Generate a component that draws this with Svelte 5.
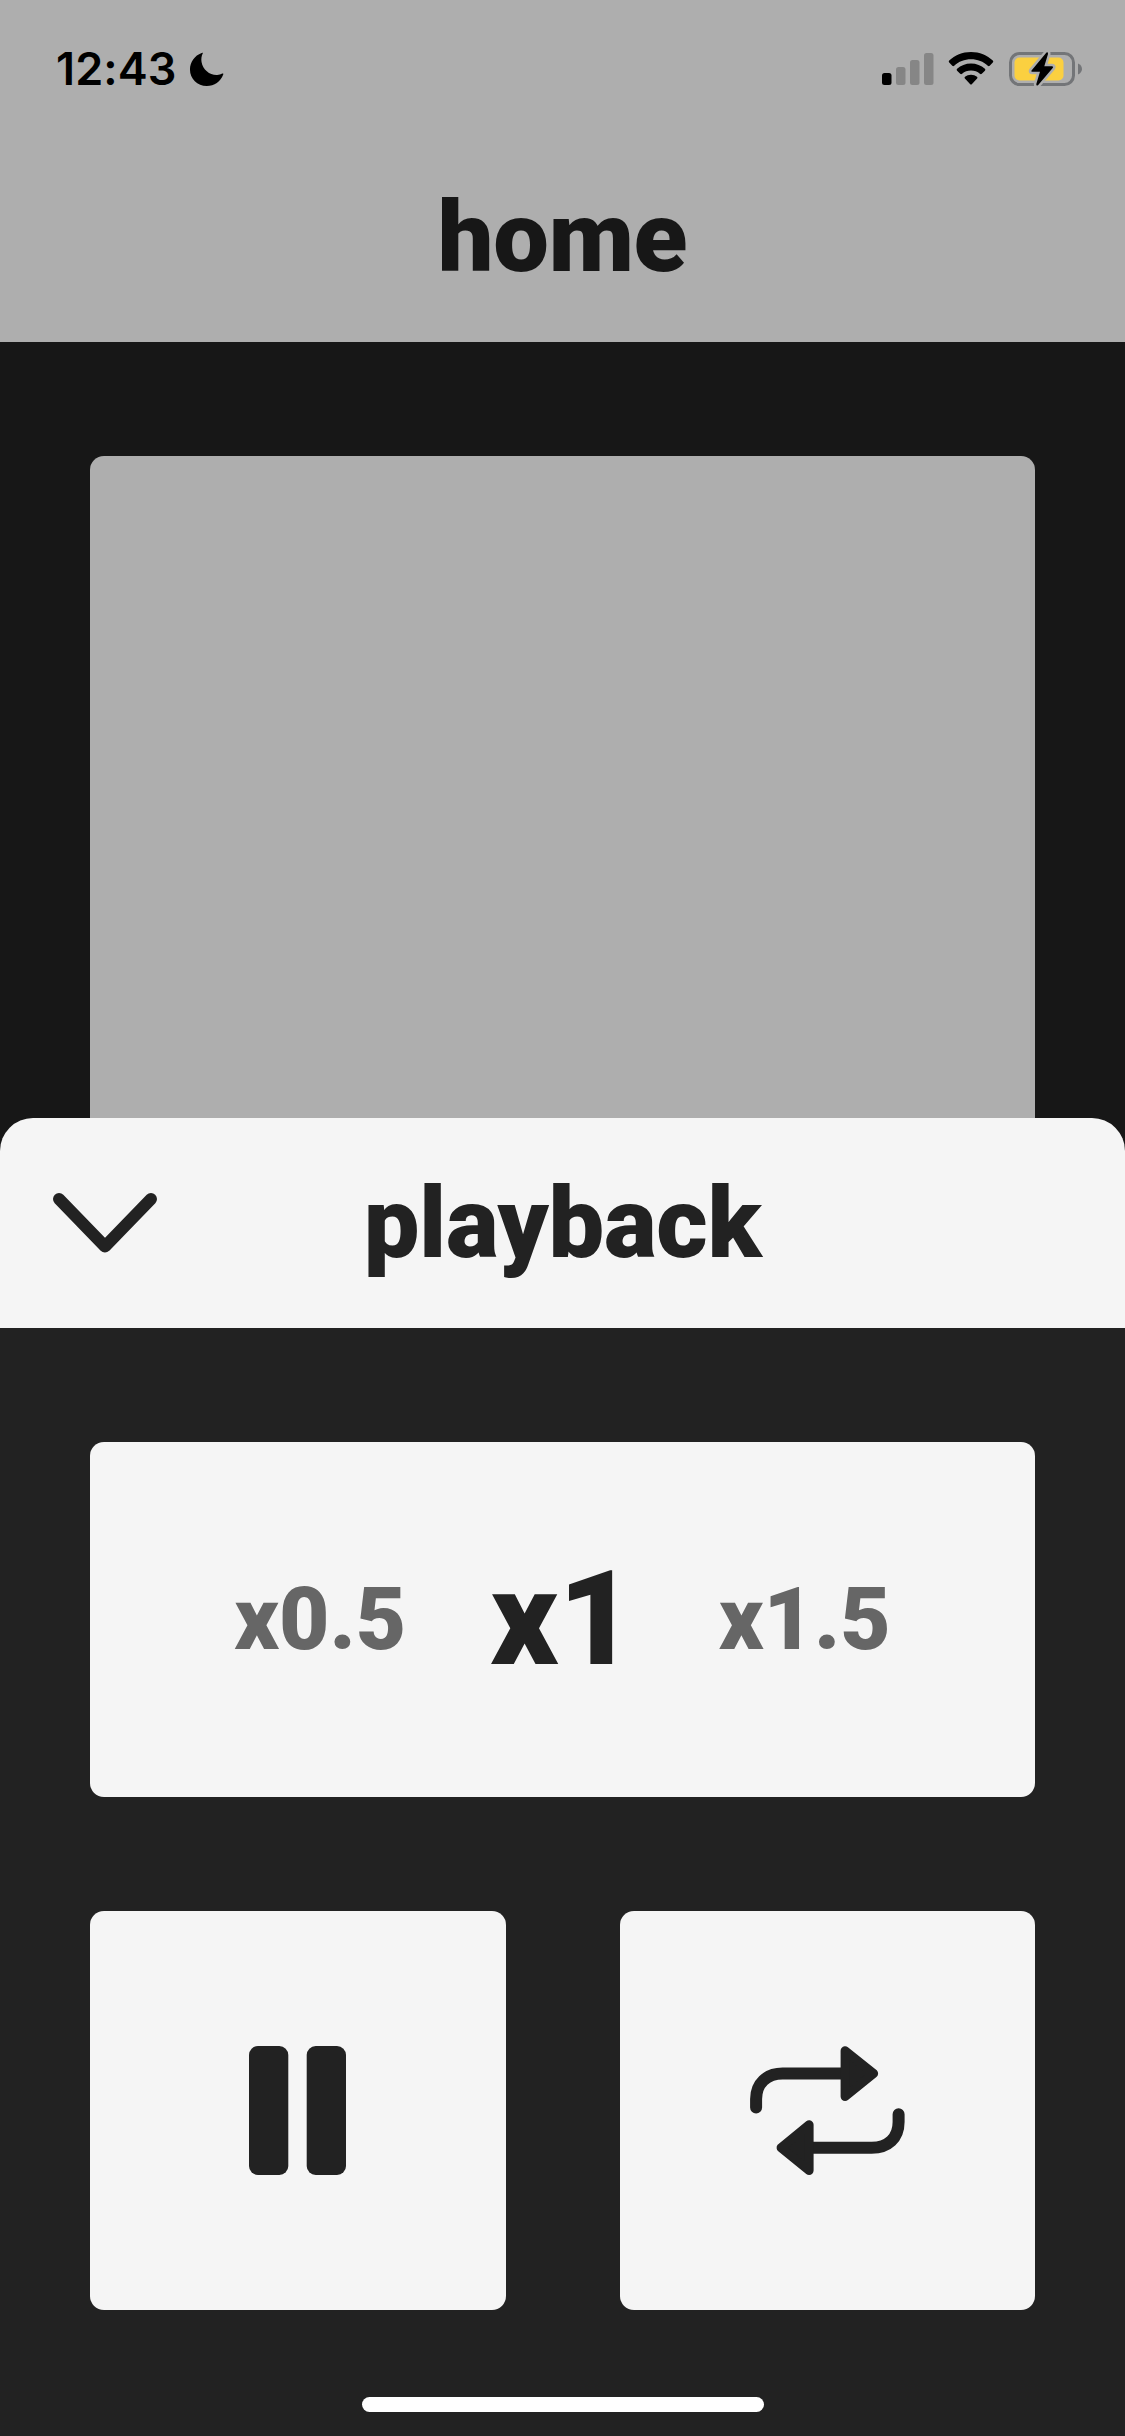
<script>
  const speeds = [
    { label: 'x0.5', active: false },
    { label: 'x1', active: true },
    { label: 'x1.5', active: false },
  ];
</script>

<div class="screen">
  <header class="home-header">
    <div class="status">
      <div class="clock">
        <span class="time">12:43</span>
        <svg class="moon" width="35" height="35" viewBox="0 0 36 36">
          <path d="M14.2 1.2C12.8 4 12.4 7 12.9 10.2C14.2 18.2 21.5 24 29 23.6C31 23.5 32.8 23 34.2 22.2C35 21.8 35.6 22.3 35.2 23.2C32.6 30.5 26 35 18.3 35C8.600 35 1 27.600 1 18C1 10.300 5.800 3.500 13 .9C14 .5 14.600 .6 14.200 1.200Z" />
        </svg>
      </div>
      <div class="indicators">
        <svg width="52" height="34" viewBox="0 0 52 34">
          <rect x="0" y="21" width="9.500" height="12" rx="2.500" fill="#000" />
          <g fill="#868686">
            <rect x="14" y="15" width="9.500" height="18" rx="2.500" />
            <rect x="28" y="8" width="9.500" height="25" rx="2.500" />
            <rect x="42" y="1" width="9.500" height="32" rx="2.500" />
          </g>
        </svg>
        <svg class="wifi" width="46" height="34" viewBox="0 0 46 34">
          <path d="M23 0C31.600 0 39.200 3.200 44.800 8.600Q45.800 9.600 44.800 10.600L41.700 13.700Q40.800 14.600 39.800 13.700C35.400 9.500 29.500 7.200 23 7.200S10.600 9.500 6.200 13.700Q5.200 14.600 4.300 13.700L1.200 10.600Q.2 9.600 1.200 8.600C6.800 3.200 14.400 0 23 0Z" />
          <path d="M23 11.500C28.400 11.500 33.200 13.500 36.900 16.800Q37.900 17.700 36.900 18.700L33.800 21.700Q32.900 22.600 31.900 21.800C29.500 19.800 26.400 18.600 23 18.600S16.500 19.800 14.100 21.800Q13.100 22.600 12.200 21.700L9.100 18.700Q8.100 17.700 9.100 16.800C12.800 13.500 17.600 11.500 23 11.500Z" />
          <path d="M23 22.800C25.300 22.800 27.400 23.500 29 24.800Q30 25.700 29.100 26.600L24 31.900Q23 32.900 22 31.900L16.900 26.600Q16 25.700 17 24.800C18.600 23.500 20.700 22.800 23 22.800Z" />
        </svg>
        <svg class="battery" width="74" height="38" viewBox="0 0 74 38">
          <rect x="1.500" y="3.500" width="63" height="31" rx="9" fill="none" stroke="#737578" stroke-width="3" />
          <path d="M69 13.500C71.800 14.700 73 16.800 73 19S71.800 23.300 69 24.500Z" fill="#737578" />
          <rect x="5.500" y="7.500" width="49" height="23" rx="5" fill="#fbd040" />
          <path d="M37.500 2.500L22.500 20.500Q21.800 21.800 23.200 21.800H31L27.300 34Q27.200 36.500 29.200 35L43.700 18Q44.800 16.200 43 16.200H35.300L39 4Q39.200 1.300 37.500 2.500Z" stroke="#aeaeae" stroke-width="5" paint-order="stroke" />
        </svg>
      </div>
    </div>
    <h1>home</h1>
  </header>

  <main class="home-body">
    <div class="preview"></div>
  </main>

  <section class="sheet">
    <header class="sheet-header">
      <button class="close" aria-label="close">
        <svg width="106" height="62" viewBox="0 0 106 62">
          <path d="M7 7L53 54.500L99 7" fill="none" stroke="#222" stroke-width="12" stroke-linecap="round" stroke-linejoin="round" />
        </svg>
      </button>
      <h2>playback</h2>
    </header>
    <div class="controls">
      <div class="speeds">
        {#each speeds as speed}
          <span class="speed" class:active={speed.active}>{speed.label}</span>
        {/each}
      </div>
      <div class="buttons">
        <button class="tile" aria-label="pause">
          <svg width="97" height="129" viewBox="0 0 97 129">
            <rect width="39.300" height="129" rx="9" />
            <rect x="57.700" width="39.300" height="129" rx="9" />
          </svg>
        </button>
        <button class="tile" aria-label="repeat">
          <svg width="156" height="130" viewBox="-.6 0 156 130">
            <g fill="none" stroke="#222" stroke-width="12" stroke-linecap="round">
              <path d="M6.500 61.500V53C6.500 37.500 17 27.600 33 27.600H95" />
              <path d="M149 68.200V76C149 92 138.500 101.700 122 101.700H60" />
            </g>
            <g stroke="#222" stroke-width="9" stroke-linejoin="round">
              <path d="M95.500 4.700V50.500L124 27.600Z" />
              <path d="M59.500 78.800V124.500L31.500 101.700Z" />
            </g>
          </svg>
        </button>
      </div>
      <div class="home-indicator"></div>
    </div>
  </section>
</div>

<style>
  :global(body) {
    margin: 0;
    background: #222;
  }

  .screen {
    display: flex;
    flex-direction: column;
    width: 1125px;
    height: 2436px;
    overflow: hidden;
    background: #171717;
    font-family: Roboto, sans-serif;
  }

  .home-header {
    height: 342px;
    background: #aeaeae;
    color: #171717;
  }

  .status {
    display: flex;
    justify-content: space-between;
    box-sizing: border-box;
    height: 132px;
    padding: 50px 42px 0 56px;
    color: #000;
  }

  .clock,
  .indicators {
    display: flex;
    align-items: center;
    height: 38px;
  }

  .time {
    font: 580 45px/38px Inter, sans-serif;
    letter-spacing: 0.1px;
  }

  .moon {
    margin-left: 12px;
  }

  .wifi {
    margin-left: 14px;
  }

  .battery {
    margin-left: 15px;
  }

  h1,
  h2 {
    margin: 0;
    font-size: 99px;
    font-weight: 900;
    line-height: 210px;
    letter-spacing: -0.3px;
    text-align: center;
  }

  .home-body {
    height: 776px;
    box-sizing: border-box;
    padding: 114px 90px 0;
  }

  .preview {
    height: 100%;
    border-radius: 14px 14px 0 0;
    background: #aeaeae;
  }

  .sheet {
    display: flex;
    flex: 1;
    flex-direction: column;
    overflow: hidden;
    border-radius: 33px 33px 0 0;
    background: #222;
    color: #222;
  }

  .sheet-header {
    display: grid;
    grid-template-columns: 210px 1fr 210px;
    height: 210px;
    background: #f5f5f5;
  }

  button {
    display: flex;
    align-items: center;
    justify-content: center;
    padding: 0;
    border: 0;
    background: none;
  }

  .tile svg {
    fill: #222;
  }

  .controls {
    display: flex;
    flex: 1;
    flex-direction: column;
    padding: 114px 90px 0;
  }

  .speeds {
    display: flex;
    align-items: center;
    justify-content: center;
    gap: 84px;
    height: 355px;
    border-radius: 14px;
    background: #f5f5f5;
  }

  .speed {
    color: #666;
    font-size: 87px;
    font-weight: 900;
    line-height: 1;
  }

  .speed.active {
    margin-bottom: 2px;
    color: #222;
    font-size: 132px;
  }

  .buttons {
    display: grid;
    grid-template-columns: 1fr 1fr;
    gap: 114px;
    height: 399px;
    margin-top: 114px;
  }

  .tile {
    border-radius: 14px;
    background: #f5f5f5;
  }

  .home-indicator {
    align-self: center;
    width: 402px;
    height: 15px;
    margin-top: 87px;
    border-radius: 8px;
    background: #fff;
  }
</style>
